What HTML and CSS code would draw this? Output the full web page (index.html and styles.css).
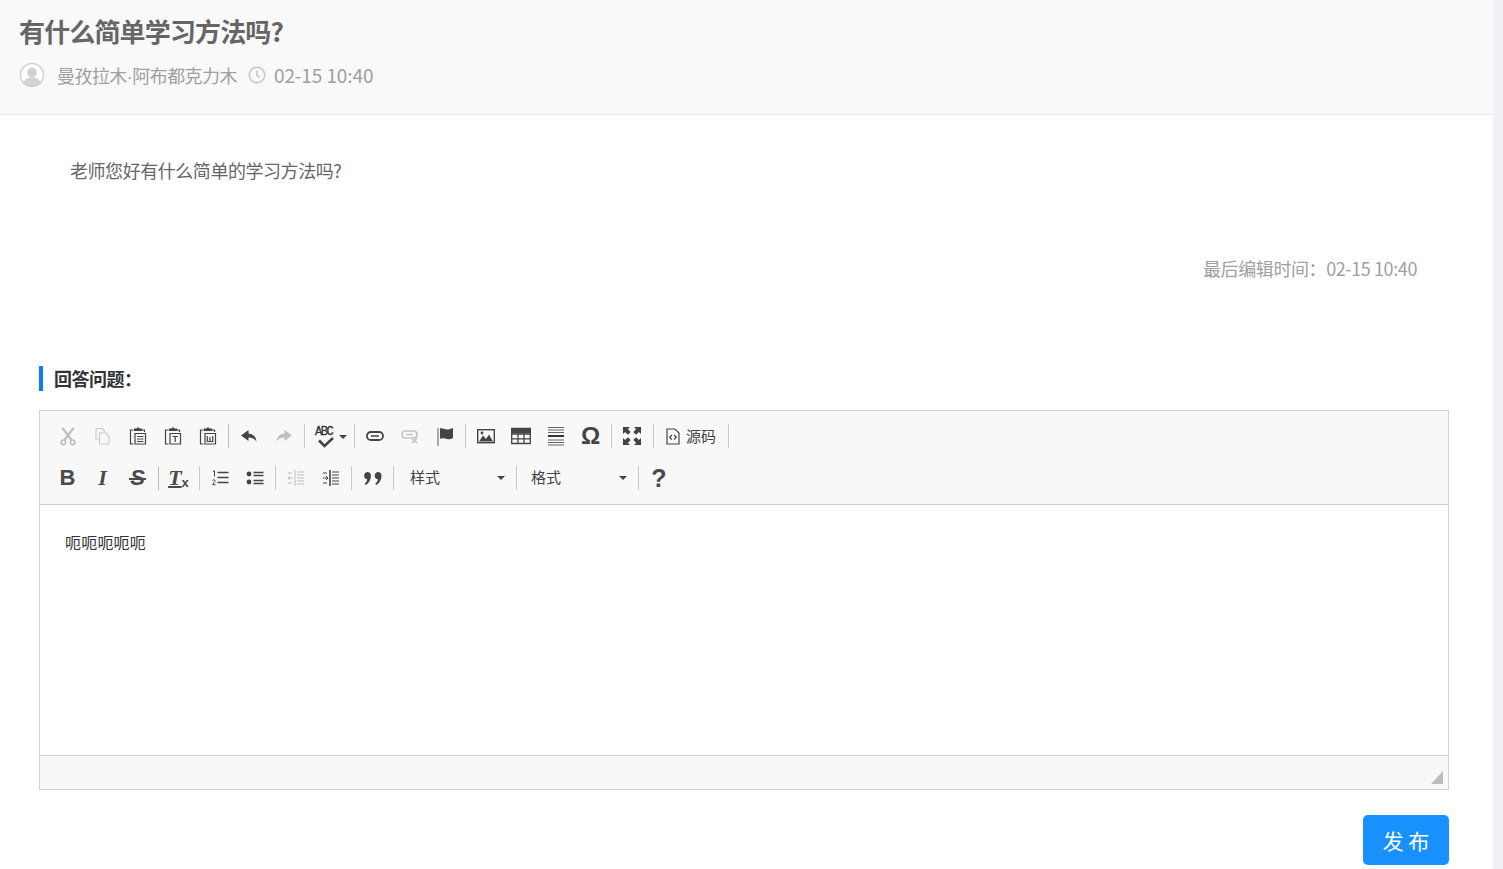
FILE: index.html
```html
<!DOCTYPE html>
<html lang="zh-CN">
<head>
<meta charset="utf-8">
<title>有什么简单学习方法吗?</title>
<link rel="stylesheet" href="styles.css">
</head>
<body>
<div class="page">
<main class="main">
  <header class="head">
    <h1 class="title">有什么简单学习方法吗?</h1>
    <div class="meta">
      <svg class="avatar" width="26" height="26" viewBox="0 0 26 26"><circle cx="13" cy="13" r="11.500" fill="#fff" stroke="#d2d2d2" stroke-width="1.500"/><circle cx="13" cy="10.500" r="5" fill="#d2d2d2"/><path d="M4.500 20.500c1.500-4 5-5 8.500-5s7 1 8.500 5c-2 2.500-5 4-8.500 4s-6.500-1.500-8.500-4z" fill="#d2d2d2"/></svg>
      <span class="author">曼孜拉木·阿布都克力木</span>
      <svg class="clock" width="18" height="18" viewBox="0 0 18 18" fill="none" stroke="#c4c4c4" stroke-width="1.500"><circle cx="9" cy="9" r="7.700"/><path d="M9 4.500V9.500L12 11.500"/></svg>
      <span class="date">02-15 10:40</span>
    </div>
  </header>
  <section class="content">
    <p class="question">老师您好有什么简单的学习方法吗?</p>
    <p class="edited">最后编辑时间：02-15 10:40</p>
    <h2 class="answer-title">回答问题：</h2>
    <div class="editor">
      <div class="toolbar">
        <div class="row">
          <span class="group">
            <span class="btn off"><svg width="18" height="19" viewBox="0 0 18 19" fill="none" stroke="#555" stroke-width="2.200"><path d="M3.500 1l9 12M14.500 1l-9 12"/><circle cx="4.300" cy="15.300" r="2.300" stroke-width="1.600"/><circle cx="13.700" cy="15.300" r="2.300" stroke-width="1.600"/></svg></span>
            <span class="btn off"><svg width="18" height="18" viewBox="0 0 18 18" fill="none" stroke="#777" stroke-width="1.100"><path d="M2 1.500h6l2.500 2.500v1M2 1.500V12h3"/><path d="M5.500 6h6l3.500 3.500v7.500H5.500z"/></svg></span>
            <span class="btn"><svg width="18" height="18" viewBox="0 0 18 18" fill="none" stroke="#444" stroke-width="1.200"><path d="M4.500 3H1.500v14h3M13 3h2.500v2"/><path fill="#444" d="M5.500 3.500V2h2.500l.5-1h1l.5 1h2.500v1.500z"/><path d="M6 6.500h10.500v10.500H6zM8 9.500h6.500M8 12h6.500M8 14.500h6.500"/></svg></span>
            <span class="btn"><svg width="18" height="18" viewBox="0 0 18 18" fill="none" stroke="#444" stroke-width="1.200"><path d="M4.500 3H1.500v14h3M13 3h2.500v2"/><path fill="#444" d="M5.500 3.500V2h2.500l.5-1h1l.5 1h2.500v1.500z"/><path d="M6 6.500h10.500v10.500H6zM8.500 9.500h5.500M11.200 9.500v5.500"/></svg></span>
            <span class="btn"><svg width="18" height="18" viewBox="0 0 18 18" fill="none" stroke="#444" stroke-width="1.200"><path d="M4.500 3H1.500v14h3M13 3h2.500v2"/><path fill="#444" d="M5.500 3.500V2h2.500l.5-1h1l.5 1h2.500v1.500z"/><path d="M6 6.500h10.500v10.500H6zM8.300 9v5.500h5.400V9M11 10v4"/></svg></span>
          </span>
          <i class="sep strong"></i>
          <span class="group">
            <span class="btn"><svg width="18" height="18" viewBox="0 0 18 18"><path fill="#444" d="M8.500 3L1 8.500 8.500 14v-3.500c3.500 0 5.500 1 8 4-.5-5-3.500-7.500-8-8z"/></svg></span>
            <span class="btn off"><svg width="18" height="18" viewBox="0 0 18 18"><path fill="#555" d="M9.500 3L17 8.500 9.500 14v-3.500c-3.500 0-5.500 1-8 4 .5-5 3.500-7.500 8-8z"/></svg></span>
          </span>
          <i class="sep"></i>
          <span class="group">
            <span class="btn spell"><span class="abc">ABC</span><svg class="check" width="18" height="11" viewBox="0 0 18 11" fill="none" stroke="#444" stroke-width="2.600"><path d="M2 3.500L7.500 9 16 1"/></svg><i class="caret"></i></span>
          </span>
          <i class="sep"></i>
          <span class="group">
            <span class="btn"><svg width="18" height="18" viewBox="0 0 18 18" fill="none" stroke="#444" stroke-width="1.800"><rect x="1" y="5" width="16" height="8" rx="3.800"/><path d="M5 9h8" stroke-width="1.500"/></svg></span>
            <span class="btn off"><svg width="18" height="18" viewBox="0 0 18 18" fill="none" stroke="#666" stroke-width="1.700"><rect x="1" y="4" width="15" height="7" rx="3.300"/><path d="M5 7.500h7M11 11l5 5M16 11l-5 5"/></svg></span>
            <span class="btn"><svg width="18" height="19" viewBox="0 0 18 19"><path d="M2 1v18" stroke="#777" stroke-width="1.200"/><path fill="#444" d="M4 1.500c3-1 5 1.500 8 1 2-.2 3.500-1 5-1.500v10c-2.500 1.500-5 1.500-8 .5-2-.5-3.500-.5-5 .2z"/></svg></span>
          </span>
          <i class="sep"></i>
          <span class="group">
            <span class="btn"><svg width="18" height="18" viewBox="0 0 18 18"><rect x=".7" y="2.700" width="16.600" height="13" fill="none" stroke="#444" stroke-width="1.400"/><path fill="#444" d="M2 14.500l4-6 3 3.500 3-4.500 4 7z"/><circle cx="5" cy="6" r="1.400" fill="#444"/></svg></span>
            <span class="btn"><svg width="20" height="18" viewBox="0 0 20 18" fill="none" stroke="#444" stroke-width="1.300"><path d="M.7 2h18.600v14.500H.7zM.7 7h18.600M.7 11.800h18.600M7 5v11.500M13 5v11.500"/><path d="M.7 1.500h18.600v4H.7z" fill="#444"/></svg></span>
            <span class="btn"><svg width="18" height="20" viewBox="0 0 18 20" fill="none" stroke="#666" stroke-width="1"><path d="M1 1.500h16M1 4h16M1 6.500h16M1 14h16M1 16.500h16M1 19h16"/><path d="M1 10h16" stroke="#333" stroke-width="2"/></svg></span>
            <span class="btn omega">Ω</span>
          </span>
          <i class="sep"></i>
          <span class="group">
            <span class="btn maxi"><svg width="18" height="18" viewBox="0 0 18 18"><g fill="#444"><path d="M0 0h7L4.900 2.100 7.700 4.900 4.900 7.700 2.100 4.900 0 7z"/><path d="M18 0v7l-2.100-2.100-2.800 2.800-2.800-2.800 2.800-2.800L11 0z"/><path d="M0 18v-7l2.100 2.100 2.800-2.800 2.800 2.800-2.800 2.800L7 18z"/><path d="M18 18h-7l2.100-2.100-2.800-2.800 2.800-2.800 2.800 2.800L18 11z"/></g></svg></span>
          </span>
          <i class="sep"></i>
          <span class="group">
            <span class="btn wide"><svg width="14" height="17" viewBox="0 0 14 17" fill="none" stroke="#444" stroke-width="1.200"><path d="M1 1h8l4 4v11H1z"/><path d="M5.800 7L3.800 9.300l2 2.300M8.200 7l2 2.300-2 2.300" stroke-width="1.300"/></svg><span class="src">源码</span></span>
          </span>
          <i class="sep"></i>
        </div>
        <div class="row">
          <span class="group">
            <span class="btn letter b">B</span>
            <span class="btn letter i">I</span>
            <span class="btn letter s">S</span>
          </span>
          <i class="sep strong"></i>
          <span class="group">
            <span class="btn letter tx"><span class="t">T</span><span class="x">x</span></span>
          </span>
          <i class="sep"></i>
          <span class="group">
            <span class="btn"><svg width="18" height="18" viewBox="0 0 18 18" fill="none" stroke="#444"><path d="M6.500 3.500h11M6.500 8.500h11M6.500 13.500h11" stroke-width="1.500"/><path d="M2 2.500l1.500-.8V7.500M1.500 11.500c.5-1.200 3-1 2.500.8L1.500 15.700h3" stroke-width="1"/></svg></span>
            <span class="btn"><svg width="18" height="18" viewBox="0 0 18 18"><circle cx="3" cy="5" r="2.400" fill="#444"/><circle cx="3" cy="13" r="2.400" fill="#444"/><path d="M7.500 3.500h10M7.500 6.500h10M7.500 11.500h10M7.500 14.500h10" stroke="#444" stroke-width="1.500"/></svg></span>
          </span>
          <i class="sep"></i>
          <span class="group">
            <span class="btn off"><svg width="18" height="18" viewBox="0 0 18 18" fill="none" stroke="#555" stroke-width="1"><path d="M8 1v16M10 3h7M10 6h7M10 9h7M10 12h7M10 15h7M1 9h5M3 7L1 9l2 2M1 4h4M1 14h4" /></svg></span>
            <span class="btn"><svg width="18" height="18" viewBox="0 0 18 18" fill="none" stroke="#444" stroke-width="1"><path d="M8 1v16" stroke-width="1.600"/><path d="M10 3h7M10 6h7M10 9h7M10 12h7M10 15h7M1 9h5M4 7l2 2-2 2M1 4h4M1 14h4" /></svg></span>
          </span>
          <i class="sep"></i>
          <span class="group">
            <span class="btn quote"><svg width="19" height="15" viewBox="0 0 19 15"><path fill="#444" d="M4.200 1a3.700 3.700 0 0 1 3.700 3.700c0 4-2 7.500-5.300 9.300l-.9-1.300c1.500-1.300 2.400-2.700 2.600-4.400A3.700 3.700 0 0 1 4.200 1zM14.800 1a3.700 3.700 0 0 1 3.700 3.700c0 4-2 7.500-5.300 9.300l-.9-1.300c1.500-1.300 2.400-2.700 2.600-4.400A3.700 3.700 0 0 1 14.800 1z"/></svg></span>
          </span>
          <i class="sep"></i>
          <span class="combo"><span class="combo-label">样式</span><i class="caret"></i></span>
          <i class="sep"></i>
          <span class="combo fmt"><span class="combo-label">格式</span><i class="caret"></i></span>
          <i class="sep"></i>
          <span class="group">
            <span class="btn help">?</span>
          </span>
        </div>
      </div>
      <div class="body-area">呃呃呃呃呃</div>
      <div class="status"><svg class="grip" width="12" height="13" viewBox="0 0 12 13"><path fill="#bdbdbd" d="M12 0v13H0z"/></svg></div>
    </div>
    <div class="actions"><button class="publish" type="button">发 布</button></div>
  </section>
</main>
<div class="rail"></div>
</div>
</body>
</html>
```
FILE: styles.css
```css
html, body { margin: 0; padding: 0; height: 100%; overflow: hidden; background: #fff; }
body { font-family: "Noto Sans CJK SC", "Liberation Sans", sans-serif; color: #333; }
.page { display: flex; height: 869px; overflow: hidden; }
.main { width: 1493px; flex: none; }
.rail { width: 10px; flex: none; background: #eff1f6; }

.head { box-sizing: border-box; background: #f9f9f9; border-bottom: 1px solid #e9e9e9; height: 115px; padding: 13px 19px 0; }
.title { margin: 0; font-size: 26px; line-height: 36px; font-weight: 700; color: #666; letter-spacing: -.85px; }
.meta { display: flex; align-items: center; margin-top: 11px; height: 30px; color: #a0a0a0; font-size: 18px; }
.avatar { margin-right: 12px; flex: none; }
.author { font-family: "Liberation Sans", "Noto Sans CJK SC", sans-serif; letter-spacing: -.55px; }
.clock { margin: 0 8px 0 11px; flex: none; }
.date { font-size: 19px; letter-spacing: -.1px; margin-top: -2px; }

.content { padding: 0 44px 0 39px; }
.question { margin: 0; padding: 41px 0 0 31px; font-size: 18px; line-height: 28px; color: #666; letter-spacing: -.45px; }
.edited { margin: 70px 32px 0 0; text-align: right; font-size: 18px; line-height: 28px; color: #a0a0a0; letter-spacing: -.4px; }
.answer-title { margin: 84px 0 0; height: 25px; line-height: 25px; border-left: 4px solid #0a7bff; padding-left: 11px; font-size: 18px; font-weight: 700; color: #333; letter-spacing: -.5px; }

.editor { margin-top: 19px; border: 1px solid #d1d1d1; height: 380px; box-sizing: border-box; display: flex; flex-direction: column; }
.toolbar { height: 94px; box-sizing: border-box; background: #f8f8f8; border-bottom: 1px solid #d1d1d1; padding: 4px 0 0 10px; flex: none; }
.row { display: flex; align-items: center; height: 42px; }
.group { display: flex; align-items: center; }
.btn { width: 35px; height: 28px; display: flex; align-items: center; justify-content: center; flex: none; position: relative; color: #444; }
.btn.off { opacity: .35; }
.sep { display: block; width: 1px; height: 24px; background: #c8c8c8; flex: none; margin: 0 2px 0 3px; }
.sep.strong { background: #bcbcbc; }
.spell { width: 44px; }
.abc { position: absolute; left: 8px; top: 3px; font: 400 12px/14px "Liberation Mono", monospace; color: #333; letter-spacing: -1.500px; -webkit-text-stroke: .3px #333; }
.check { position: absolute; left: 10px; top: 15px; }
.caret { display: block; width: 0; height: 0; border-left: 4px solid transparent; border-right: 4px solid transparent; border-top: 4px solid #444; }
.spell .caret { position: absolute; left: 32px; top: 13px; }
.omega { font: 700 24px/28px "Liberation Sans", sans-serif; }
.maxi { width: 36px; }
.wide { width: 69px; gap: 6px; justify-content: flex-start; padding-left: 10px; box-sizing: border-box; }
.src { font-size: 15px; line-height: 20px; color: #444; letter-spacing: 0; }
.letter { font-family: "Liberation Sans", sans-serif; font-weight: 700; font-size: 22px; color: #4a4a4a; }
.i { font-family: "Liberation Serif", serif; font-style: italic; }
.s { font-style: italic; }
.s::after { content: ""; position: absolute; left: 9px; right: 9px; top: 14px; height: 2px; background: #4a4a4a; }
.tx { font-size: 22px; }
.t { font-family: "Liberation Serif", serif; font-style: italic; text-decoration: underline; text-decoration-thickness: 2px; }
.x { font-size: 13px; position: relative; top: 4px; }
.quote { width: 36px; }
.combo { width: 117px; height: 28px; padding: 0 8px 0 14px; box-sizing: border-box; display: flex; align-items: center; justify-content: space-between; font-size: 15px; color: #444; flex: none; }
.combo-label { margin-top: -4px; }
.fmt { width: 116px; padding-left: 12px; }
.help { font: 700 25px/28px "Liberation Sans", sans-serif; color: #4a4a4a; padding-left: 1px; box-sizing: border-box; }

.body-area { flex: 1; padding: 26px 25px 0; font-size: 16px; line-height: 22px; color: #333; background: #fff; letter-spacing: .2px; }
.status { height: 34px; flex: none; box-sizing: border-box; background: #f8f8f8; border-top: 1px solid #d1d1d1; display: flex; justify-content: flex-end; align-items: flex-end; padding: 0 5px 5px 0; }

.actions { display: flex; justify-content: flex-end; margin-top: 25px; }
.publish { width: 86px; height: 50px; border: 0; border-radius: 5px; background: #1890ff; color: #fff; font-family: "Noto Sans CJK SC", sans-serif; font-size: 21px; padding: 0; }
```
